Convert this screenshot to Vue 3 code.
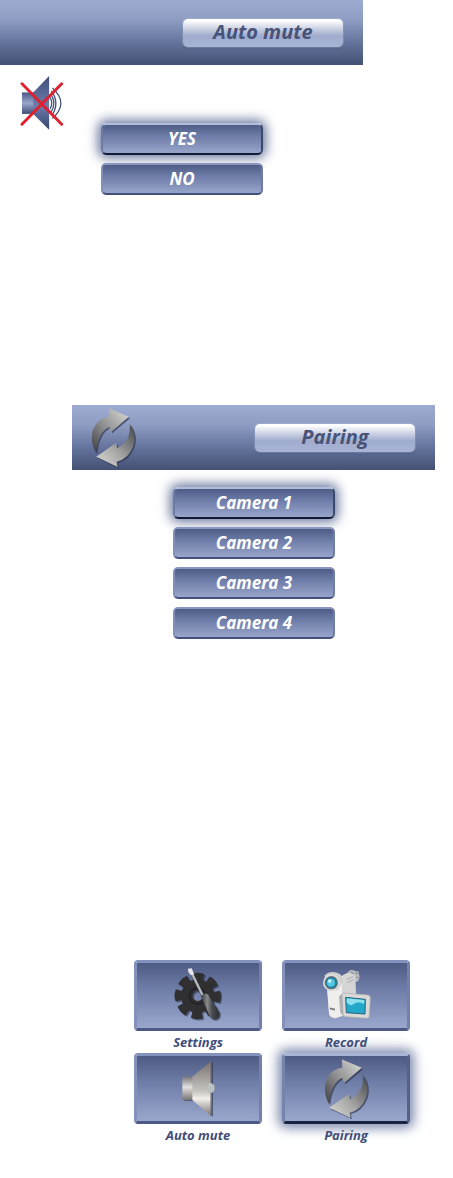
<script setup>
import { ref } from 'vue'

const mute = ref('YES')
const camera = ref('Camera 1')
const menu = ref('Pairing')
const cameras = ['Camera 1', 'Camera 2', 'Camera 3', 'Camera 4']
const tiles = ['Settings', 'Record', 'Auto mute', 'Pairing']
</script>

<template>
  <main class="page">
    <svg class="defs" aria-hidden="true">
      <defs>
        <linearGradient id="steelUp" x1="0" y1="1" x2="1" y2="0">
          <stop offset="0" stop-color="#3c3d40" />
          <stop offset="0.45" stop-color="#8c8c8e" />
          <stop offset="1" stop-color="#deded9" />
        </linearGradient>
        <linearGradient id="steelDown" x1="0" y1="1" x2="1" y2="0">
          <stop offset="0" stop-color="#dcdcd8" />
          <stop offset="0.45" stop-color="#a6a6a5" />
          <stop offset="1" stop-color="#424447" />
        </linearGradient>
        <path id="arrowUp" d="M70 12L131 38L77 84L71 69Q38 84 31 148Q13 116 21 82Q34 42 72 38Z" />
        <path id="arrowDown" d="M92 118L32 160L97 191L94 175Q130 167 145 127Q156 90 134 60Q139 112 96 134Z" />
        <symbol id="cycle" viewBox="14 8 141 189">
          <g fill="#242a3d" opacity="0.6" transform="translate(4 4)">
            <use href="#arrowUp" /><use href="#arrowDown" />
          </g>
          <use href="#arrowUp" fill="url(#steelUp)" />
          <use href="#arrowDown" fill="url(#steelDown)" />
        </symbol>
      </defs>
    </svg>

    <section class="mute">
      <header class="bar"><h2 class="title">Auto mute</h2></header>
      <div class="mute-body">
        <svg class="muted" viewBox="0 0 130 168" aria-hidden="true">
          <defs>
            <linearGradient id="blueBox" x1="0" y1="0" x2="0" y2="1">
              <stop offset="0" stop-color="#475887" /><stop offset="0.5" stop-color="#9aa5ca" /><stop offset="1" stop-color="#3f4d78" />
            </linearGradient>
            <linearGradient id="blueCone" x1="0" y1="0" x2="0" y2="1">
              <stop offset="0" stop-color="#3d4c78" /><stop offset="0.55" stop-color="#6d7cab" /><stop offset="1" stop-color="#34436e" />
            </linearGradient>
          </defs>
          <path d="M6 52H43V117H6Z" fill="url(#blueBox)" />
          <path d="M40 52L88 2V165L40 117Z" fill="url(#blueCone)" />
          <g fill="none" stroke="#46557f" stroke-width="4">
            <path d="M91 68Q101 85 91 102" /><path d="M93 57Q112 85 93 113" />
            <path d="M95 47Q122 85 95 123" /><path d="M98 39Q149 85 98 131" />
          </g>
          <path d="M6 26L126 148M126 26L6 148" stroke="#df202e" stroke-width="9" stroke-linecap="round" />
        </svg>
        <div class="options">
          <button v-for="o in ['YES', 'NO']" :key="o" type="button" class="option" :class="{ active: mute === o }" @click="mute = o">{{ o }}</button>
        </div>
      </div>
    </section>

    <section class="pairing">
      <header class="bar">
        <svg class="cycle" aria-hidden="true"><use href="#cycle" /></svg>
        <h2 class="title">Pairing</h2>
      </header>
      <div class="options cameras">
        <button v-for="c in cameras" :key="c" type="button" class="option" :class="{ active: camera === c }" @click="camera = c">{{ c }}</button>
      </div>
    </section>

    <nav class="menu">
      <button v-for="t in tiles" :key="t" type="button" class="item" @click="menu = t">
        <span class="tile" :class="{ active: menu === t }">
          <svg v-if="t === 'Settings'" class="icon" viewBox="0 0 150 165" aria-hidden="true">
            <defs>
              <linearGradient id="handle"><stop offset="0" stop-color="#393b3f" /><stop offset="0.35" stop-color="#88898a" /><stop offset="0.6" stop-color="#4b4c4f" /><stop offset="1" stop-color="#2c2d30" /></linearGradient>
              <g id="gearShape">
                <path fill-rule="evenodd" d="M-50 0A50 50 0 1 0 50 0A50 50 0 1 0 -50 0M-15 0A15 15 0 1 1 15 0A15 15 0 1 1 -15 0" />
                <path v-for="a in 8" :key="a" d="M-13 -44L-18 -66Q0 -73 18 -66L13 -44Z" :transform="`rotate(${a * 45 + 2})`" />
              </g>
            </defs>
            <use href="#gearShape" transform="translate(78 88)" fill="#1d2435" opacity="0.5" />
            <use href="#gearShape" transform="translate(74 84)" fill="#303033" />
            <circle cx="74" cy="84" r="24" fill="none" stroke="#232326" stroke-width="6" />
            <path d="M56 12L93 89" stroke="#303237" stroke-width="11" />
            <path d="M52 7L91 86" stroke="#b8babb" stroke-width="7" />
            <path d="M45 2L56 1L64 19L54 22L46 12Z" fill="#e8e8e8" />
            <path d="M89 83Q99 73 109 82L143 136Q146 156 128 158Q117 158 112 145Z" fill="#222633" opacity="0.6" />
            <path d="M84 84Q94 71 106 80L138 134Q141 152 125 154Q114 154 109 142Z" fill="url(#handle)" />
          </svg>

          <svg v-else-if="t === 'Record'" class="icon" viewBox="0 0 150 165" aria-hidden="true">
            <path d="M80 13Q88 2 102 9L112 10L116 27L112 40L98 43Z" fill="#b9bcc1" />
            <path d="M90 12L96 17M104 12L110 18M106 28L113 29" stroke="#8b9099" stroke-width="4" />
            <path d="M18 46L78 15Q94 13 103 26L107 132L43 151Q26 149 24 136Z" fill="#d7d7d6" />
            <path d="M18 60L63 42L68 139L43 151Q26 149 24 136Z" fill="#efeeec" />
            <path d="M63 43L101 28L104 85L63 92Z" fill="#d5d5d5" />
            <path d="M77 34L96 26M80 43L98 35" stroke="#b4b7ba" stroke-width="4" />
            <path d="M12 22Q29 4 58 19L67 38L51 65L24 70L8 53Z" fill="#cfd0d0" />
            <circle cx="31" cy="44" r="25" fill="#dedddb" />
            <circle cx="31" cy="44" r="20" fill="#68737c" />
            <circle cx="31" cy="44" r="17" fill="#207f9b" />
            <circle cx="30" cy="44" r="12" fill="#54c8df" />
            <circle cx="26" cy="39" r="5" fill="#d8f5f9" />
            <path d="M54 85L67 75L75 82L73 147L58 135Z" fill="#b0b0b0" />
            <path d="M27 121L42 125" stroke="#777b7f" stroke-width="5" />
            <path d="M67 75L142 81Q148 82 148 90L145 144Q144 152 137 151L72 146Q66 145 66 138L63 80Q63 76 67 75Z" fill="#d9d9d6" stroke="#a9abad" stroke-width="2" />
            <path d="M74 88L133 94L132 138L76 134Z" fill="#22a9ca" stroke="#25627f" stroke-width="3" />
            <path d="M77 91L130 96L129 108Q113 98 98 108Q86 117 77 103Z" fill="#8ee0ed" />
          </svg>

          <svg v-else-if="t === 'Auto mute'" class="icon speaker" viewBox="0 0 105 172" aria-hidden="true">
            <defs>
              <linearGradient id="box" x1="0" y1="0" x2="0" y2="1"><stop offset="0" stop-color="#7a7777" /><stop offset="0.45" stop-color="#e3e1df" /><stop offset="1" stop-color="#777473" /></linearGradient>
              <linearGradient id="cone" x1="0" y1="0" x2="0" y2="1"><stop offset="0" stop-color="#75716e" /><stop offset="0.55" stop-color="#c8c5c1" /><stop offset="0.68" stop-color="#f2efeb" /><stop offset="1" stop-color="#777371" /></linearGradient>
            </defs>
            <path d="M8 54L38 51L88 5L96 6V170L42 122L10 121Z" fill="#262e46" opacity="0.6" />
            <path d="M4 49H37V119H4Z" fill="url(#box)" />
            <path d="M34 49L91 2V168L34 119Z" fill="url(#cone)" />
            <path d="M90 4V166" stroke="#666563" stroke-width="3" />
            <path d="M84 68Q101 68 101 83Q101 98 84 100Q76 84 84 68Z" fill="#bac2bd" />
          </svg>

          <svg v-else class="cycle" aria-hidden="true"><use href="#cycle" /></svg>
        </span>
        <span class="caption">{{ t }}</span>
      </button>
    </nav>
  </main>
</template>

<style>
body {
  margin: 0;
  background: #fff;
}
</style>

<style scoped>
.page {
  font-family: "Open Sans", "Noto Sans", sans-serif;
  font-style: italic;
  font-weight: 700;
  padding-bottom: 32px;
}
.defs {
  position: absolute;
  width: 0;
  height: 0;
}
.mute {
  margin-right: 90px;
}
.bar {
  display: flex;
  align-items: center;
  height: 65px;
  box-sizing: border-box;
  padding: 0 20px 0 18px;
  background: linear-gradient(#9dabd0, #8f9dc4 30%, #65749d 65%, #445174);
}
.title {
  width: 160px;
  height: 28px;
  margin: 0 0 0 auto;
  border-radius: 5px;
  background: linear-gradient(#fff 5%, #cbd1e3 35%, #a0acce 60%, #a9b4d4);
  box-shadow: 0 0 2px #c3cde5, 0 2px 2px #4d5b86;
  color: #475378;
  font-size: 20px;
  line-height: 26px;
  text-align: center;
}
.mute-body {
  display: flex;
  align-items: flex-start;
}
.muted {
  width: 43px;
  height: 56px;
  margin: 10px 38px 0 20px;
}
.options {
  display: flex;
  flex-direction: column;
  gap: 8px;
  width: 162px;
}
.mute-body .options {
  margin-top: 58px;
}
.option {
  height: 32px;
  padding: 0;
  border: 2px solid;
  border-color: #8797bf #6e7da7 #435078 #8190b9;
  border-radius: 5px;
  background: linear-gradient(#4e5c86, #6d7ca8 40%, #98a5cb);
  color: #fff;
  font: inherit;
  font-size: 17px;
  line-height: 26px;
}
.option.active {
  border-color: #b0bddd #39486c #111b36 #6c7ba5;
  box-shadow: 0 0 12px 3px #68769d;
}
.pairing {
  margin: 210px 18px 0 72px;
}
.cameras {
  margin: 17px 0 0 101px;
}
.cycle {
  width: 47px;
  height: 62px;
}
.menu {
  display: grid;
  grid-template-columns: 128px 128px;
  column-gap: 20px;
  margin: 321px 0 0 134px;
}
.item {
  display: block;
  padding: 0;
  border: 0;
  background: none;
  color: #3f4d7a;
  font: inherit;
}
.tile {
  display: flex;
  align-items: center;
  justify-content: center;
  height: 71px;
  box-sizing: border-box;
  border: 3px solid;
  border-color: #8493bd #7281aa #4b5984 #8392bb;
  border-radius: 4px;
  background: linear-gradient(#4e5b84, #6e7da7 40%, #9aa7cd);
}
.tile.active {
  border-color: #a8b5d8 #536289 #19243f #7584ac;
  box-shadow: 0 0 12px 4px #7d8aae;
}
.icon {
  width: 50px;
  height: 55px;
}
.speaker {
  width: 35px;
  height: 58px;
}
.caption {
  position: relative;
  display: block;
  font-size: 13px;
  line-height: 22px;
}
</style>
